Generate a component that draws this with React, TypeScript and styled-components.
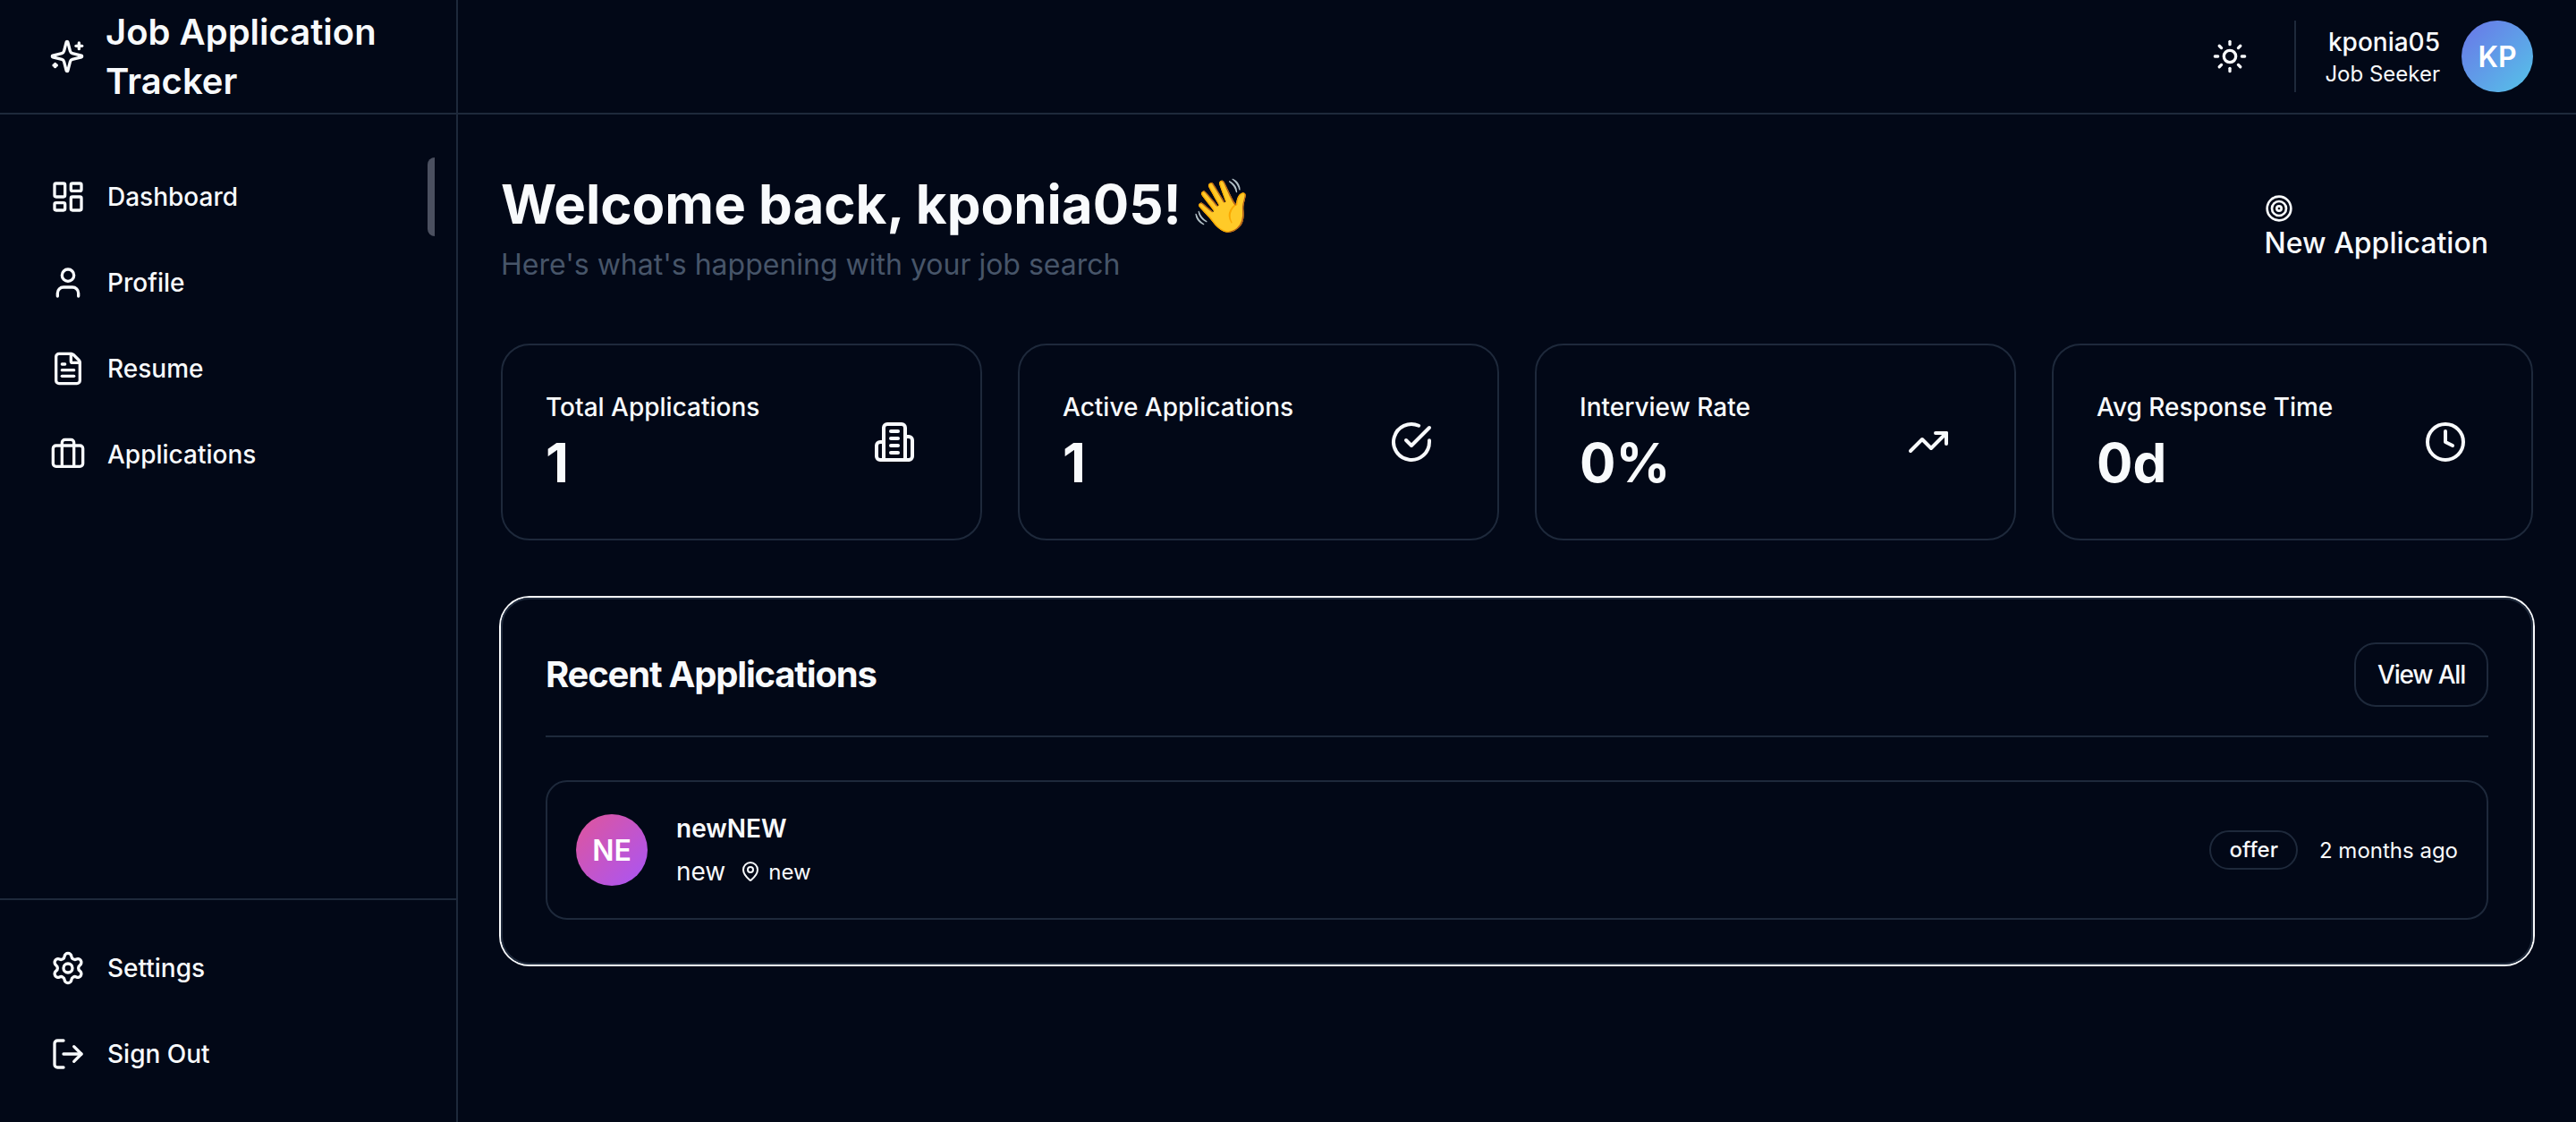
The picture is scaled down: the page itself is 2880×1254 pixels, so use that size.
import React from 'react';
import styled, { createGlobalStyle } from 'styled-components';
import {
  Briefcase,
  Clock,
  FileText,
  LayoutDashboard,
  LogOut,
  MapPin,
  Settings,
  Sun,
  Target,
  TrendingUp,
  User,
} from 'lucide-react';

const colors = {
  bg: '#020817',
  border: '#1e293b',
  text: '#f8fafc',
  muted: '#475569',
};

const GlobalStyle = createGlobalStyle`
  * { box-sizing: border-box; }
  html, body { margin: 0; padding: 0; background: ${colors.bg}; }
  body {
    font-family: Inter, "Noto Sans", sans-serif;
    color: ${colors.text};
  }
`;

// older lucide drawings, the installed version has redrawn these
const StrokeIcon = styled.svg.attrs({
  viewBox: '0 0 24 24',
  fill: 'none',
  stroke: 'currentColor',
  strokeWidth: 2,
  strokeLinecap: 'round',
  strokeLinejoin: 'round',
})<{ $size: number }>`
  flex: none;
  width: ${({ $size }) => $size}px;
  height: ${({ $size }) => $size}px;
`;

const SparklesIcon = () => (
  <StrokeIcon $size={40}>
    <path d="M9.937 15.5A2 2 0 0 0 8.5 14.063l-6.135-1.582a.5.5 0 0 1 0-.962L8.5 9.936A2 2 0 0 0 9.937 8.5l1.582-6.135a.5.5 0 0 1 .963 0L14.063 8.5A2 2 0 0 0 15.5 9.937l6.135 1.581a.5.5 0 0 1 0 .964L15.5 14.063a2 2 0 0 0-1.437 1.437l-1.582 6.135a.5.5 0 0 1-.963 0z" />
    <path d="M20 3v4" />
    <path d="M22 5h-4" />
    <path d="M4 17v2" />
    <path d="M5 18H3" />
  </StrokeIcon>
);

const BuildingIcon = ({ size }: { size: number }) => (
  <StrokeIcon $size={size}>
    <path d="M6 22V4a2 2 0 0 1 2-2h8a2 2 0 0 1 2 2v18Z" />
    <path d="M6 12H4a2 2 0 0 0-2 2v6a2 2 0 0 0 2 2h2" />
    <path d="M18 9h2a2 2 0 0 1 2 2v9a2 2 0 0 1-2 2h-2" />
    <path d="M10 6h4" />
    <path d="M10 10h4" />
    <path d="M10 14h4" />
    <path d="M10 18h4" />
  </StrokeIcon>
);

const CheckIcon = ({ size }: { size: number }) => (
  <StrokeIcon $size={size}>
    <path d="M22 11.08V12a10 10 0 1 1-5.93-9.14" />
    <path d="m9 11 3 3L22 4" />
  </StrokeIcon>
);

const Shell = styled.div`
  display: grid;
  grid-template-columns: 512px 1fr;
  height: 1254px;
  overflow: hidden;
`;

const Sidebar = styled.aside`
  display: flex;
  flex-direction: column;
  border-right: 2px solid ${colors.border};
`;

const Brand = styled.div`
  display: flex;
  align-items: center;
  gap: 23px;
  height: 128px;
  padding: 0 55px;
  border-bottom: 2px solid ${colors.border};
`;

const BrandName = styled.span`
  font-size: 40px;
  line-height: 55px;
  font-weight: 600;
`;

const Nav = styled.nav`
  display: flex;
  flex-direction: column;
  gap: 8px;
  flex: 1;
  padding: 48px 24px;
`;

const SidebarFooter = styled(Nav)`
  flex: none;
  padding: 32px 24px;
  border-top: 2px solid ${colors.border};
`;

const NavItem = styled.a<{ $active?: boolean }>`
  position: relative;
  display: flex;
  align-items: center;
  gap: 24px;
  height: 88px;
  padding: 0 32px;
  font-size: 28px;
  font-weight: 500;
  color: ${colors.text};

  ${({ $active }) =>
    $active &&
    `&::after {
      content: '';
      position: absolute;
      top: 0;
      right: 0;
      width: 8px;
      height: 100%;
      border-radius: 8px 0 0 8px;
      background: #4b5060;
    }`}
`;

const Main = styled.div`
  display: flex;
  flex-direction: column;
  min-width: 0;
`;

const TopBar = styled.header`
  display: flex;
  align-items: center;
  justify-content: flex-end;
  height: 128px;
  padding: 0 48px;
  border-bottom: 2px solid ${colors.border};
`;

const ThemeToggle = styled.button`
  display: flex;
  padding: 16px;
  margin-right: 36px;
  border: 0;
  background: transparent;
  color: ${colors.text};
`;

const UserBlock = styled.div`
  display: flex;
  align-items: center;
  gap: 24px;
  height: 80px;
  padding-left: 32px;
  border-left: 2px solid ${colors.border};
`;

const UserText = styled.div`
  display: flex;
  flex-direction: column;
  align-items: flex-end;
`;

const UserName = styled.span`
  font-size: 28px;
  line-height: 40px;
  font-weight: 500;
`;

const UserRole = styled.span`
  font-size: 24px;
  line-height: 32px;
`;

const Avatar = styled.div<{ $from: string; $to: string }>`
  display: flex;
  align-items: center;
  justify-content: center;
  flex: none;
  width: 80px;
  height: 80px;
  border-radius: 50%;
  font-size: 32px;
  font-weight: 600;
  color: #fff;
  background: linear-gradient(135deg, ${({ $from }) => $from}, ${({ $to }) => $to});
`;

const Content = styled.main`
  padding: 48px;
`;

const PageHeader = styled.div`
  display: flex;
  align-items: center;
  justify-content: space-between;
  margin-bottom: 64px;
`;

const Title = styled.h1`
  margin: 0;
  padding-top: 8px;
  font-size: 60px;
  line-height: 88px;
  font-weight: 700;
`;

const Wave = styled.span`
  margin-left: -5px;
  font-size: 58px;
  line-height: 0;
`;

const Subtitle = styled.p`
  margin: 0;
  font-size: 32px;
  line-height: 48px;
  color: ${colors.muted};
`;

const NewButton = styled.button`
  padding: 40px 50px 24px 48px;
  border: 0;
  background: transparent;
  color: ${colors.text};
  font: 500 32px/46px Inter, sans-serif;
  text-align: left;

  svg {
    display: block;
  }
`;

const StatGrid = styled.div`
  display: grid;
  grid-template-columns: repeat(4, 1fr);
  gap: 40px;
  margin-bottom: 64px;
`;

const StatCard = styled.div`
  display: flex;
  align-items: center;
  justify-content: space-between;
  height: 220px;
  padding: 0 48px;
  border: 2px solid ${colors.border};
  border-radius: 32px;
`;

const StatText = styled.div`
  padding-top: 4px;
`;

const StatLabel = styled.div`
  margin-bottom: 2px;
  font-size: 28px;
  line-height: 40px;
  font-weight: 500;
`;

const StatValue = styled.div`
  font-size: 60px;
  line-height: 80px;
  font-weight: 700;
`;

const StatIcon = styled.div`
  display: flex;
  padding: 24px;
`;

const Panel = styled.section`
  padding: 48px;
  border: 2px solid ${colors.border};
  border-radius: 32px;
  box-shadow: 0 0 0 2px ${colors.text};
`;

const PanelHeader = styled.div`
  display: flex;
  align-items: center;
  justify-content: space-between;
  padding-bottom: 32px;
  margin-bottom: 48px;
  border-bottom: 2px solid ${colors.border};
`;

const PanelTitle = styled.h2`
  margin: 0;
  padding-bottom: 2px;
  font-size: 40px;
  font-weight: 700;
  letter-spacing: -1.2px;
`;

const ViewAll = styled.button`
  height: 72px;
  padding: 0 24px;
  border: 2px solid ${colors.border};
  border-radius: 24px;
  background: transparent;
  color: ${colors.text};
  font: 500 28px Inter, sans-serif;
  letter-spacing: -1.2px;
`;

const AppRow = styled.div`
  display: flex;
  align-items: center;
  gap: 32px;
  padding: 32px;
  border: 2px solid ${colors.border};
  border-radius: 24px;
`;

const AppInfo = styled.div`
  display: flex;
  flex-direction: column;
  flex: 1;
`;

const AppName = styled.div`
  font-size: 28px;
  line-height: 40px;
  font-weight: 600;
`;

const AppMeta = styled.div`
  display: flex;
  align-items: center;
  height: 48px;
  padding-top: 8px;
  font-size: 28px;
`;

const AppLocation = styled.span`
  display: flex;
  align-items: center;
  gap: 8px;
  margin-left: 16px;
  font-size: 24px;
`;

const AppStatus = styled.div`
  display: flex;
  align-items: center;
  gap: 24px;
  font-size: 24px;
`;

const Pill = styled.span`
  padding: 4px 20px;
  border: 2px solid ${colors.border};
  border-radius: 999px;
  line-height: 32px;
  font-weight: 500;
`;

const stats = [
  { label: 'Total Applications', value: '1', icon: <BuildingIcon size={48} /> },
  { label: 'Active Applications', value: '1', icon: <CheckIcon size={48} /> },
  { label: 'Interview Rate', value: '0%', icon: <TrendingUp size={48} /> },
  { label: 'Avg Response Time', value: '0d', icon: <Clock size={48} /> },
];

export default function App() {
  return (
    <>
      <GlobalStyle />
      <Shell>
        <Sidebar>
          <Brand>
            <SparklesIcon />
            <BrandName>Job Application Tracker</BrandName>
          </Brand>
          <Nav>
            <NavItem $active><LayoutDashboard size={40} />Dashboard</NavItem>
            <NavItem><User size={40} />Profile</NavItem>
            <NavItem><FileText size={40} />Resume</NavItem>
            <NavItem><Briefcase size={40} />Applications</NavItem>
          </Nav>
          <SidebarFooter>
            <NavItem><Settings size={40} />Settings</NavItem>
            <NavItem><LogOut size={40} />Sign Out</NavItem>
          </SidebarFooter>
        </Sidebar>
        <Main>
          <TopBar>
            <ThemeToggle><Sun size={40} /></ThemeToggle>
            <UserBlock>
              <UserText>
                <UserName>kponia05</UserName>
                <UserRole>Job Seeker</UserRole>
              </UserText>
              <Avatar $from="#6a74e8" $to="#55c4e8">KP</Avatar>
            </UserBlock>
          </TopBar>
          <Content>
            <PageHeader>
              <div>
                <Title>Welcome back, kponia05! <Wave>👋</Wave></Title>
                <Subtitle>Here's what's happening with your job search</Subtitle>
              </div>
              <NewButton><Target size={32} />New Application</NewButton>
            </PageHeader>
            <StatGrid>
              {stats.map(({ label, value, icon }) => (
                <StatCard key={label}>
                  <StatText>
                    <StatLabel>{label}</StatLabel>
                    <StatValue>{value}</StatValue>
                  </StatText>
                  <StatIcon>{icon}</StatIcon>
                </StatCard>
              ))}
            </StatGrid>
            <Panel>
              <PanelHeader>
                <PanelTitle>Recent Applications</PanelTitle>
                <ViewAll>View All</ViewAll>
              </PanelHeader>
              <AppRow>
                <Avatar $from="#e0559a" $to="#a855f7">NE</Avatar>
                <AppInfo>
                  <AppName>newNEW</AppName>
                  <AppMeta>
                    new
                    <AppLocation><MapPin size={24} />new</AppLocation>
                  </AppMeta>
                </AppInfo>
                <AppStatus>
                  <Pill>offer</Pill>
                  2 months ago
                </AppStatus>
              </AppRow>
            </Panel>
          </Content>
        </Main>
      </Shell>
    </>
  );
}
